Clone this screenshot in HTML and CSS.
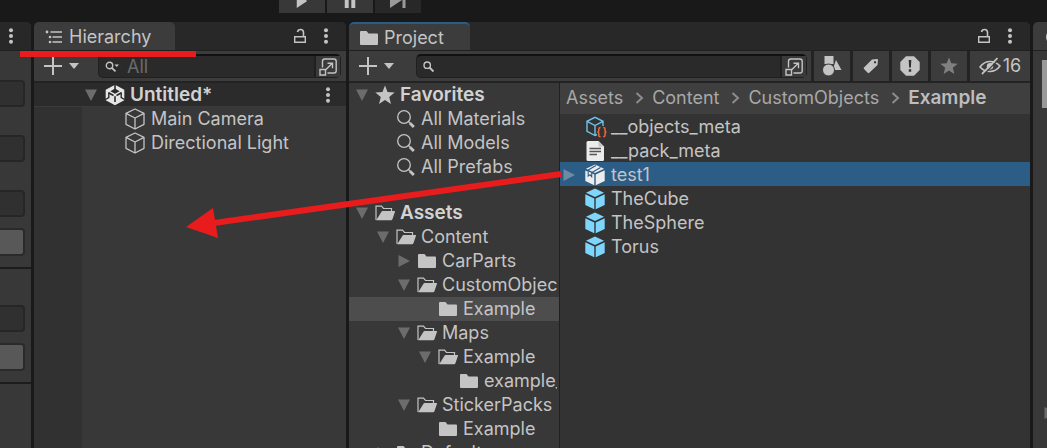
FILE: index.html
```html
<!DOCTYPE html>
<html lang="en">
<head>
<meta charset="utf-8">
<title>Editor</title>
<link rel="stylesheet" href="styles.css">
</head>
<body>
<svg class="defs" aria-hidden="true">
  <symbol id="kebab" viewBox="0 0 6 16"><g fill="currentColor"><circle cx="3" cy="2.3" r="2"/><circle cx="3" cy="8" r="2"/><circle cx="3" cy="13.7" r="2"/></g></symbol>
  <symbol id="lock" viewBox="0 0 14 16"><path d="M1.7 8.7h10.6v5.6H1.7z" fill="none" stroke="currentColor" stroke-width="1.4"/><path d="M10.5 8.500V4.500Q10.500 1.500 7.500 1.500Q5 1.500 4.500 4" fill="none" stroke="currentColor" stroke-width="1.6"/></symbol>
  <symbol id="plus" viewBox="0 0 18 18"><path d="M9 0v18M0 9h18" stroke="currentColor" stroke-width="2"/></symbol>
  <symbol id="caret" viewBox="0 0 10 6"><path d="M0 0h10L5 6z" fill="currentColor"/></symbol>
  <symbol id="search" viewBox="0 0 14 14"><circle cx="5.200" cy="5.200" r="3.200" fill="none" stroke="currentColor" stroke-width="1.400"/><path d="M7.500 7.500 11.500 11.500" stroke="currentColor" stroke-width="1.800"/></symbol>
  <symbol id="searchmenu" viewBox="0 0 14 12"><circle cx="4.500" cy="4.500" r="3.200" fill="none" stroke="currentColor" stroke-width="1.400"/><path d="M6.800 6.800 10.500 10.300" stroke="currentColor" stroke-width="1.800"/><path d="M9.500 3.500h4.500L11.700 6z" fill="currentColor"/></symbol>
  <symbol id="expand" viewBox="0 0 18 18"><g fill="none" stroke="currentColor" stroke-width="1.400"><path d="M3.500 9.500V3.200Q3.500 1 5.700 1H15Q17.200 1 17.200 3.200V12.800Q17.200 15 15 15H8.500"/><path d="M1 11.500h5.500v5.500H1zM7 11.500 13 5.500M8.500 5.200h5v5"/></g></symbol>
  <symbol id="down" viewBox="0 0 14 14"><path d="M1 1.500h12L7 13z" fill="currentColor"/></symbol>
  <symbol id="right" viewBox="0 0 14 14"><path d="M1.500 1v12L13 7z" fill="currentColor"/></symbol>
  <symbol id="folder" viewBox="0 0 20 16"><path d="M1 2Q1 1 2 1H7.500L9.500 3.500H18Q19 3.500 19 4.500V14Q19 15 18 15H2Q1 15 1 14z" fill="currentColor"/></symbol>
  <symbol id="open" viewBox="0 0 20 16"><path d="M1 15V1.200H6.500L8.500 3.500H16.500V6.500" fill="none" stroke="currentColor" stroke-width="1.200"/><path d="M6.500 6.800Q6.800 6 7.500 6H19.500Q20.300 6 20 6.800L17.500 14Q17.200 15.200 16 15.200H1.200z" fill="currentColor"/></symbol>
  <symbol id="star" viewBox="0 0 18 18"><path d="M9 0.500 11.300 6.300 17.700 6.700 12.800 10.700 14.400 17 9 13.500 3.600 17 5.200 10.700 .3 6.700 6.700 6.300z" fill="currentColor"/></symbol>
  <symbol id="lens" viewBox="0 0 20 20"><circle cx="8" cy="8" r="6.300" fill="none" stroke="currentColor" stroke-width="1.300"/><path d="M12.500 12.500 13.800 13.800" stroke="currentColor" stroke-width="1.400"/><path d="M13.800 14 17.800 18" stroke="currentColor" stroke-width="2.800"/></symbol>
  <symbol id="wirecube" viewBox="0 0 20 22"><path d="M10 1 19 5.300V16.300L10 21 1 16.300V5.300zM1 5.300 10 10 19 5.300M10 10V21" fill="none" stroke="currentColor" stroke-width="1.300" stroke-linejoin="round"/></symbol>
  <symbol id="cube" viewBox="0 0 20 22"><g fill="#7fd6fd"><path d="M10 .5 19 4.800 10 9 1 4.800z"/><path d="M.3 6.300 9.300 10.400V21.300L.3 17z"/><path d="M19.700 6.300 10.700 10.400V21.300L19.700 17z"/></g></symbol>
  <symbol id="meta" viewBox="0 0 22 22"><path d="M12 18.500 10 19.500 2 15.300V5.300L10 1.300 18 5.300V10M2 5.300 10 9.500 18 5.300M10 9.500V19.500" fill="none" stroke="#6fc3e8" stroke-width="1.400"/><path d="M15.500 11.500Q13.800 11.500 13.800 13V15Q13.800 16 12.300 16Q13.800 16 13.800 17.200V19.500Q13.800 20.800 15.500 20.800M18.300 11.500Q20 11.500 20 13V15Q20 16 21.500 16Q20 16 20 17.200V19.500Q20 20.800 18.300 20.800" fill="none" stroke="#f06a3c" stroke-width="1.500"/></symbol>
  <symbol id="doc" viewBox="0 0 20 22"><path d="M1.500 2.500Q1.500 1 3 1H13.500L19 6.500V19.500Q19 21 17.500 21H3Q1.500 21 1.500 19.500z" fill="#ececec"/><path d="M13.500 1V6.500H19" fill="#c4c4c4"/><path d="M4.500 8.500H16M4.500 11.500H16M4.500 14.500H12" stroke="#555" stroke-width="1.300"/></symbol>
  <symbol id="package" viewBox="0 0 20 22"><g fill="#ececec"><path d="M.3 6.500 9.300 10.600V21.300L.3 17z"/><path d="M19.700 6.300 10.700 10.400V21.300L19.700 17z"/><path d="M10 .5 19 4.800 10 9 1 4.800z"/></g><path d="M2.800 6.200 11 1.500M7 8.500 15.500 3.500" stroke="#2c5d87" stroke-width="1.200"/><path d="M3.200 7.400V12.200L5 10.700 6.700 12.800V9" fill="#ececec" stroke="#2c5d87" stroke-width="1.100"/></symbol>
  <symbol id="unity" viewBox="0 0 20 22"><path d="M10 .8 19.300 5.800V16.200L10 21.200 .7 16.200V5.800z" fill="#e6e6e6"/><path d="M10 4.600 14.600 7.200 10 9.700 5.400 7.200z" fill="#2b2b2b"/><path d="M10 0V5M10 12.300V18M8.500 11.500 3.500 8.800M11.500 11.500 16.500 8.800" stroke="#2b2b2b" stroke-width="1.600"/><path d="M3.800 8.500V13.500L0 15.700M16.200 8.500V13.500L20 15.700" fill="none" stroke="#2b2b2b" stroke-width="1.400"/></symbol>
  <symbol id="list" viewBox="0 0 18 14"><path d="M5.500 2H17M7.500 7H17M7.500 12H17" stroke="currentColor" stroke-width="1.400"/><g fill="currentColor"><circle cx="2" cy="2" r="1.400"/><circle cx="5" cy="7" r="1.300"/><circle cx="5" cy="12" r="1.300"/></g></symbol>
  <symbol id="shapes" viewBox="0 0 20 20"><g fill="currentColor"><path d="M2.500 0h9v8h-9z"/><path d="M14 4 19.500 14H10.500z"/><circle cx="6.500" cy="14" r="6" stroke="#3c3c3c"/></g></symbol>
  <symbol id="tag" viewBox="0 0 16 16"><path fill-rule="evenodd" d="M9 1.500 14 1Q15.200 1 15 2.200L14.500 7 6.300 14.800Q5.500 15.500 4.700 14.800L1 11Q.3 10.200 1 9.500zM12 3a1.200 1.200 0 1 0 .1 0z" fill="currentColor"/></symbol>
  <symbol id="alert" viewBox="0 0 20 20"><path d="M6 .3H14L19.700 6V14L14 19.700H6L.3 14V6z" fill="currentColor"/><path d="M8.700 4h2.600l-.4 7.500H9.100zM8.800 13.300h2.400v2.400H8.800z" fill="#303030"/></symbol>
  <symbol id="hidden" viewBox="0 0 22 18"><g fill="none" stroke="currentColor"><path d="M1 10Q5 4.500 11 4.500T21 9Q17 14.500 11 14.500 5 14.500 1 10z" stroke-width="1.600"/><path d="M3 17 18.500 1.200" stroke-width="1.800"/></g><circle cx="11" cy="9.300" r="3.200" fill="currentColor"/><path d="M4.800 17.500 20 2.200" stroke="#3c3c3c" stroke-width="1.200"/></symbol>
  <symbol id="chev" viewBox="0 0 9 12"><path d="M1.500 1 7 6 1.500 11" fill="none" stroke="currentColor" stroke-width="2"/></symbol>
  <symbol id="play" viewBox="0 0 14 16"><path d="M1 0 13 8 1 16z" fill="currentColor"/></symbol>
  <symbol id="pause" viewBox="0 0 14 16"><path d="M1 0h4.500v16H1zM8.500 0H13v16H8.500z" fill="currentColor"/></symbol>
  <symbol id="step" viewBox="0 0 16 16"><path d="M0 0 12 8 0 16zM12.500 0H15.500V16H12.500z" fill="currentColor"/></symbol>
</svg>

<header class="playbar">
  <button class="play" aria-label="Play"><svg class="i14"><use href="#play"/></svg></button>
  <button class="play" aria-label="Pause"><svg class="i14"><use href="#pause"/></svg></button>
  <button class="play off" aria-label="Step"><svg class="i16"><use href="#step"/></svg></button>
</header>

<main class="workspace">
  <section class="panel side">
    <div class="tabs"><button class="icon" aria-label="Panel menu"><svg class="dots"><use href="#kebab"/></svg></button></div>
    <div class="group first">
      <input class="field" aria-label="Value 1">
      <input class="field" aria-label="Value 2">
      <input class="field" aria-label="Value 3">
      <button class="action" aria-label="Apply"></button>
    </div>
    <div class="group">
      <input class="field" aria-label="Value 4">
      <button class="action" aria-label="Apply"></button>
    </div>
  </section>

  <section class="panel hierarchy">
    <div class="tabs">
      <button class="tab"><svg class="i18"><use href="#list"/></svg>Hierarchy</button>
      <div class="tools"><button class="icon" aria-label="Lock"><svg class="lock"><use href="#lock"/></svg></button><button class="icon" aria-label="Panel menu"><svg class="dots"><use href="#kebab"/></svg></button></div>
    </div>
    <div class="bar">
      <button class="icon add" aria-label="Create"><svg class="i18"><use href="#plus"/></svg><svg class="caret"><use href="#caret"/></svg></button>
      <div class="search"><svg class="i14"><use href="#searchmenu"/></svg><input aria-label="Search hierarchy" placeholder="All"><button class="icon expand" aria-label="Open search"><svg class="i18"><use href="#expand"/></svg></button></div>
    </div>
    <div class="scene"><svg class="i14 arrow"><use href="#down"/></svg><svg class="unity"><use href="#unity"/></svg><b>Untitled*</b><button class="icon" aria-label="Scene menu"><svg class="dots"><use href="#kebab"/></svg></button></div>
    <div class="objects">
      <ul>
        <li class="row"><svg class="solid"><use href="#wirecube"/></svg>Main Camera</li>
        <li class="row"><svg class="solid"><use href="#wirecube"/></svg>Directional Light</li>
      </ul>
    </div>
  </section>

  <section class="panel project">
    <div class="tabs">
      <button class="tab active"><svg class="folder"><use href="#folder"/></svg>Project</button>
      <div class="tools"><button class="icon" aria-label="Lock"><svg class="lock"><use href="#lock"/></svg></button><button class="icon" aria-label="Panel menu"><svg class="dots"><use href="#kebab"/></svg></button></div>
    </div>
    <div class="bar">
      <button class="icon add" aria-label="Create"><svg class="i18"><use href="#plus"/></svg><svg class="caret"><use href="#caret"/></svg></button>
      <div class="search far"><svg class="i14"><use href="#search"/></svg><input aria-label="Search project"><button class="icon expand" aria-label="Open search"><svg class="i18"><use href="#expand"/></svg></button></div>
      <button class="filter" aria-label="Search by type"><svg class="i20"><use href="#shapes"/></svg></button>
      <button class="filter" aria-label="Search by label"><svg class="i16"><use href="#tag"/></svg></button>
      <button class="filter" aria-label="Search by log"><svg class="i20"><use href="#alert"/></svg></button>
      <button class="filter dim" aria-label="Save search"><svg class="i18"><use href="#star"/></svg></button>
      <button class="filter count" aria-label="Hidden packages"><svg class="eye"><use href="#hidden"/></svg>16</button>
    </div>
    <div class="split">
      <ul class="tree">
        <li class="row"><svg class="i14 arrow"><use href="#down"/></svg><svg class="i20"><use href="#star"/></svg><b>Favorites</b></li>
        <li class="row d1 leaf"><svg class="i20"><use href="#lens"/></svg>All Materials</li>
        <li class="row d1 leaf"><svg class="i20"><use href="#lens"/></svg>All Models</li>
        <li class="row d1 leaf"><svg class="i20"><use href="#lens"/></svg>All Prefabs</li>
        <li class="row root"><svg class="i14 arrow"><use href="#down"/></svg><svg class="folder"><use href="#open"/></svg><b>Assets</b></li>
        <li class="row d1"><svg class="i14 arrow"><use href="#down"/></svg><svg class="folder"><use href="#open"/></svg>Content</li>
        <li class="row d2"><svg class="i14 arrow"><use href="#right"/></svg><svg class="folder"><use href="#folder"/></svg>CarParts</li>
        <li class="row d2"><svg class="i14 arrow"><use href="#down"/></svg><svg class="folder"><use href="#open"/></svg><span class="clip">CustomObjects</span></li>
        <li class="row d3 leaf current"><svg class="folder"><use href="#folder"/></svg>Example</li>
        <li class="row d2"><svg class="i14 arrow"><use href="#down"/></svg><svg class="folder"><use href="#open"/></svg>Maps</li>
        <li class="row d3"><svg class="i14 arrow"><use href="#down"/></svg><svg class="folder"><use href="#open"/></svg>Example</li>
        <li class="row d4 leaf"><svg class="folder"><use href="#folder"/></svg><span class="clip">example_map</span></li>
        <li class="row d2"><svg class="i14 arrow"><use href="#down"/></svg><svg class="folder"><use href="#open"/></svg>StickerPacks</li>
        <li class="row d3 leaf"><svg class="folder"><use href="#folder"/></svg>Example</li>
        <li class="row d1"><svg class="i14 arrow"><use href="#right"/></svg><svg class="folder"><use href="#folder"/></svg>Default</li>
      </ul>
      <div class="browser">
        <nav class="crumbs"><a href="#assets">Assets</a><svg class="chev"><use href="#chev"/></svg><a href="#content">Content</a><svg class="chev"><use href="#chev"/></svg><a href="#custom">CustomObjects</a><svg class="chev"><use href="#chev"/></svg><b>Example</b></nav>
        <ul>
          <li class="row file"><svg class="meta"><use href="#meta"/></svg>__objects_meta</li>
          <li class="row file"><svg class="solid"><use href="#doc"/></svg>__pack_meta</li>
          <li class="row file selected"><svg class="i14 arrow"><use href="#right"/></svg><svg class="solid"><use href="#package"/></svg>test1</li>
          <li class="row file"><svg class="solid"><use href="#cube"/></svg>TheCube</li>
          <li class="row file"><svg class="solid"><use href="#cube"/></svg>TheSphere</li>
          <li class="row file"><svg class="solid"><use href="#cube"/></svg>Torus</li>
        </ul>
      </div>
    </div>
  </section>

  <section class="panel inspector">
    <div class="tabs"><button class="tab info" aria-label="Inspector"><svg class="i16"><circle cx="8" cy="8" r="7" fill="currentColor"/></svg></button></div>
    <div class="preview"></div>
    <svg class="i14 more"><use href="#right"/></svg>
  </section>
</main>

<svg class="marks" width="562" height="240" aria-hidden="true"><path d="M20 51H196V57H20zM186 227 213 208 218 238z" fill="#e81c1c"/><path d="M214 223 561 174" stroke="#e81c1c" stroke-width="6"/></svg>
</body>
</html>
```

FILE: styles.css
```css
* { box-sizing: border-box; }
body {
  margin: 0;
  height: 100vh;
  overflow: hidden;
  display: flex;
  flex-direction: column;
  background: #191919;
  color: #c4c4c4;
  font: 18px/24px Inter, "Liberation Sans", sans-serif;
}
ul { margin: 0; padding: 0; list-style: none; }
b { font-size: 19px; font-weight: 600; color: #d2d2d2; }
svg { display: block; flex: none; }
button, input { font: inherit; color: inherit; border: 0; padding: 0; margin: 0; background: none; }
.defs { display: none; }
.i14 { width: 14px; height: 14px; }
.i16 { width: 16px; height: 16px; }
.i18 { width: 18px; height: 18px; }
.i20 { width: 20px; height: 20px; }
.dots { width: 6px; height: 16px; }
.lock { width: 14px; height: 16px; }
.folder { width: 20px; height: 16px; }
.solid, .unity { width: 20px; height: 22px; }
.meta { width: 22px; height: 22px; }
.eye { width: 22px; height: 18px; }
.caret { width: 10px; height: 6px; }
.chev { width: 9px; height: 12px; margin: 0 8px 0 12px; color: #8c8c8c; }
.arrow { color: #6c6c6c; }

.playbar { flex: none; height: 22px; padding-left: 279px; display: flex; align-items: flex-start; gap: 2px; }
.play { width: 46px; height: 13px; display: flex; justify-content: center; align-items: flex-end; padding-bottom: 5px; background: #383838; overflow: hidden; }
.play.off { background: #282828; color: #9a9a9a; }

.workspace { flex: 1; min-height: 0; display: grid; grid-template-columns: 31px minmax(0, 312fr) minmax(0, 681fr) 14px; gap: 3px; }
.panel { min-width: 0; min-height: 0; display: flex; flex-direction: column; background: #383838; overflow: hidden; border-radius: 5px 5px 0 0; }
.tabs { flex: none; height: 29px; display: flex; justify-content: space-between; background: #282828; border-bottom: 1px solid #202020; }
.tab { display: flex; align-items: center; gap: 6px; padding: 2px 0 0 11px; width: 141px; background: #3c3c3c; border-radius: 5px 5px 0 0; }
.tab.active { width: 121px; padding-left: 10px; gap: 5px; border-top: 2px solid #2c5d87; }
.tools { display: flex; gap: 16px; padding-right: 17px; }
.icon { display: flex; align-items: center; justify-content: center; }

.bar { flex: none; height: 32px; display: flex; align-items: stretch; background: #3c3c3c; border-bottom: 2px solid #232323; }
.add { padding-left: 10px; gap: 7px; }
.search { flex: 1; min-width: 0; height: 24px; margin: 3px 5px 0 19px; display: flex; align-items: center; padding-left: 6px; background: #2a2a2a; border: 1px solid #202020; border-top: 2px solid #111; border-radius: 5px; }
.search.far { margin: 3px 4px 0 22px; padding-left: 5px; }
.search input { flex: 1; min-width: 0; height: 20px; padding-left: 8px; outline: 0; }
.search input::placeholder { color: #6a6a6a; opacity: 1; }
.expand { width: 26px; height: 21px; background: #3a3a3a; border-left: 2px solid #202020; }
.filter { width: 39px; display: flex; align-items: center; justify-content: center; border-left: 3px solid #232323; }
.filter.dim { color: #808080; }
.filter.count { width: 63px; gap: 2px; }

.side { border-radius: 0 5px 0 0; }
.side .tabs { padding-left: 8px; }
.group { display: flex; flex-direction: column; align-items: stretch; padding: 36px 6px 11px 0; border-bottom: 2px solid #1c1c1c; gap: 11px; }
.group.first { padding-top: 29px; }
.field { width: 100%; height: 27px; background: #303030; border: 2px solid #262626; border-left: 0; border-radius: 0 4px 4px 0; }
.field + .field { margin-top: 17px; }
.action { height: 28px; background: #585858; border: 2px solid #2a2a2a; border-left: 0; border-radius: 0 4px 4px 0; }

.scene { flex: none; height: 24px; display: flex; align-items: center; padding: 0 15px 0 50px; background: #2b2b2b; border-bottom: 1px solid #3a3a3a; }
.unity { margin: 0 5px 0 7px; }
.scene .icon { margin-left: auto; }
.objects { flex: 1; border-left: 48px solid #313131; padding-left: 43px; }
.row { height: 24px; display: flex; align-items: center; gap: 6px; white-space: nowrap; }

.split { flex: 1; min-height: 0; display: grid; grid-template-columns: 211px minmax(0, 1fr); }
.tree { overflow: hidden; border-right: 1px solid #202020; }
.tree .row { padding: 0 2px 0 6px; }
.tree .row .folder, .tree .row .i20 { margin-right: -1px; }
.tree .row.d1 { padding-left: 27px; }
.tree .row.d2 { padding-left: 48px; }
.tree .row.d3 { padding-left: 69px; }
.tree .leaf.d1 { padding-left: 47px; }
.tree .row.leaf.d1 { padding-left: 47px; }
.tree .row.leaf.d3 { padding-left: 89px; }
.tree .row.leaf.d4 { padding-left: 110px; }
.tree .root { margin-top: 22px; }
.clip { overflow: hidden; min-width: 0; }
.current { background: #4d4d4d; }

.browser { min-width: 0; background: #333; }
.crumbs { height: 31px; display: flex; align-items: center; padding: 0 6px 2px; background: #3f3f3f; white-space: nowrap; }
.crumbs a { color: #a8a8a8; text-decoration: none; }
.crumbs b { color: #bdbdbd; }
.file { padding: 1px 0 0 25px; }
.file .meta { margin-right: -2px; }
.selected { padding-left: 2px; background: #2c5d87; }
.selected .arrow { color: #6d8ba5; margin-right: 3px; }

.inspector { border-radius: 5px 0 0 0; }
.info { padding-left: 12px; }
.preview { flex: none; height: 48px; margin: 9px 0 0 9px; background: #999; }
.more { margin: 298px 0 0 10px; color: #6c6c6c; }

.marks { position: absolute; left: 0; top: 0; pointer-events: none; }
```
